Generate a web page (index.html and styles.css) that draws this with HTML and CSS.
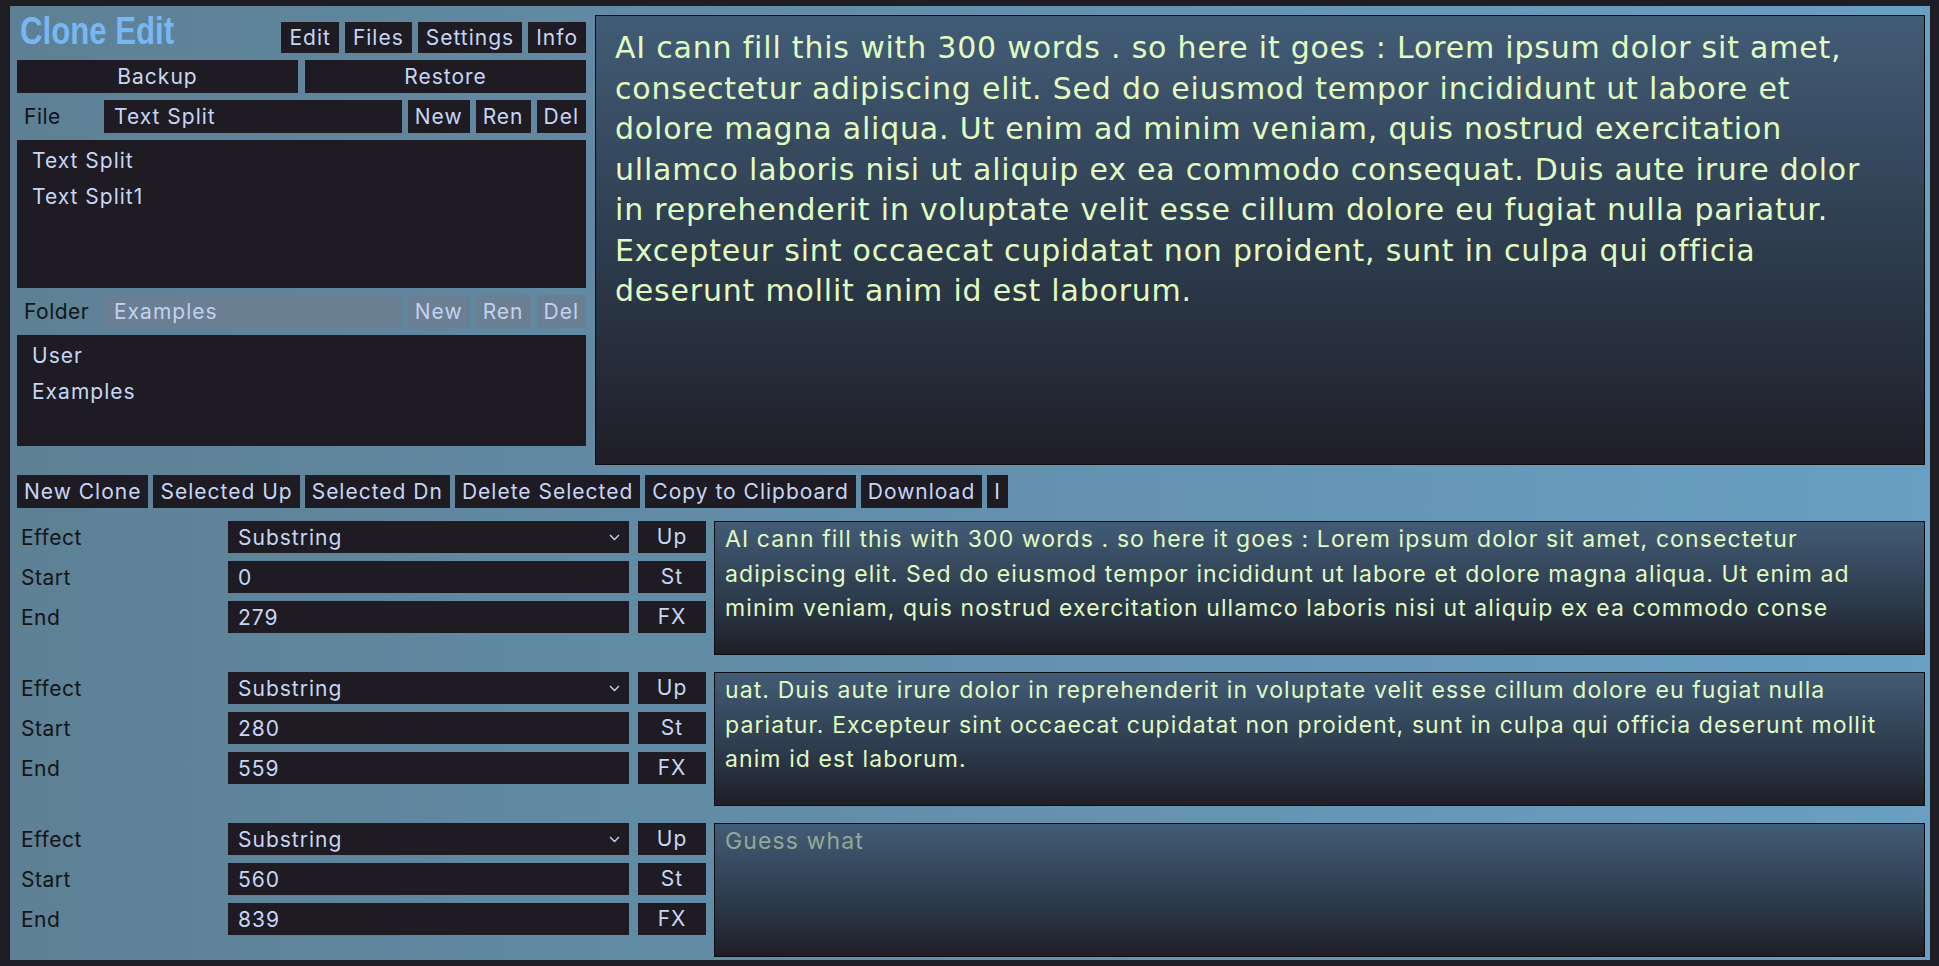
FILE: index.html
```html
<!DOCTYPE html>
<html lang="en">
<head>
<meta charset="utf-8">
<title>Clone Edit</title>
<link rel="stylesheet" href="styles.css">
</head>
<body>
<div class="app">
  <section class="top">
    <aside class="side">
      <header class="head">
        <h1 class="title">Clone Edit</h1>
        <nav class="tabs">
          <button class="btn">Edit</button>
          <button class="btn">Files</button>
          <button class="btn">Settings</button>
          <button class="btn">Info</button>
        </nav>
      </header>
      <div class="pair">
        <button class="btn">Backup</button>
        <button class="btn">Restore</button>
      </div>
      <div class="frow">
        <label class="flabel">File</label>
        <input class="field" value="Text Split">
        <button class="btn">New</button>
        <button class="btn">Ren</button>
        <button class="btn">Del</button>
      </div>
      <div class="list files">
        <div class="item">Text Split</div>
        <div class="item">Text Split1</div>
      </div>
      <div class="frow disabled">
        <label class="flabel">Folder</label>
        <input class="field" value="Examples" disabled>
        <button class="btn" disabled>New</button>
        <button class="btn" disabled>Ren</button>
        <button class="btn" disabled>Del</button>
      </div>
      <div class="list folders">
        <div class="item">User</div>
        <div class="item">Examples</div>
      </div>
    </aside>
    <div class="source">AI cann fill this with 300 words . so here it goes : Lorem ipsum dolor sit amet,<br>consectetur adipiscing elit. Sed do eiusmod tempor incididunt ut labore et<br>dolore magna aliqua. Ut enim ad minim veniam, quis nostrud exercitation<br>ullamco laboris nisi ut aliquip ex ea commodo consequat. Duis aute irure dolor<br>in reprehenderit in voluptate velit esse cillum dolore eu fugiat nulla pariatur.<br>Excepteur sint occaecat cupidatat non proident, sunt in culpa qui officia<br>deserunt mollit anim id est laborum.</div>
  </section>

  <div class="toolbar">
    <button class="btn">New Clone</button>
    <button class="btn">Selected Up</button>
    <button class="btn">Selected Dn</button>
    <button class="btn">Delete Selected</button>
    <button class="btn">Copy to Clipboard</button>
    <button class="btn">Download</button>
    <button class="btn">I</button>
  </div>

  <div class="clone">
    <div class="ctrl">
      <span class="clabel">Effect</span>
      <div class="select"><span>Substring</span><svg class="chev" width="11" height="7" viewBox="0 0 11 7"><polyline points="1,1 5.5,5.5 10,1" fill="none" stroke="currentColor" stroke-width="1.4"/></svg></div>
      <button class="btn">Up</button>
      <span class="clabel">Start</span>
      <input class="field" value="0">
      <button class="btn">St</button>
      <span class="clabel">End</span>
      <input class="field" value="279">
      <button class="btn">FX</button>
    </div>
    <div class="ctext">AI cann fill this with 300 words . so here it goes : Lorem ipsum dolor sit amet, consectetur<br>adipiscing elit. Sed do eiusmod tempor incididunt ut labore et dolore magna aliqua. Ut enim ad<br>minim veniam, quis nostrud exercitation ullamco laboris nisi ut aliquip ex ea commodo conse</div>
  </div>

  <div class="clone">
    <div class="ctrl">
      <span class="clabel">Effect</span>
      <div class="select"><span>Substring</span><svg class="chev" width="11" height="7" viewBox="0 0 11 7"><polyline points="1,1 5.5,5.5 10,1" fill="none" stroke="currentColor" stroke-width="1.4"/></svg></div>
      <button class="btn">Up</button>
      <span class="clabel">Start</span>
      <input class="field" value="280">
      <button class="btn">St</button>
      <span class="clabel">End</span>
      <input class="field" value="559">
      <button class="btn">FX</button>
    </div>
    <div class="ctext">uat. Duis aute irure dolor in reprehenderit in voluptate velit esse cillum dolore eu fugiat nulla<br>pariatur. Excepteur sint occaecat cupidatat non proident, sunt in culpa qui officia deserunt mollit<br>anim id est laborum.</div>
  </div>

  <div class="clone">
    <div class="ctrl">
      <span class="clabel">Effect</span>
      <div class="select"><span>Substring</span><svg class="chev" width="11" height="7" viewBox="0 0 11 7"><polyline points="1,1 5.5,5.5 10,1" fill="none" stroke="currentColor" stroke-width="1.4"/></svg></div>
      <button class="btn">Up</button>
      <span class="clabel">Start</span>
      <input class="field" value="560">
      <button class="btn">St</button>
      <span class="clabel">End</span>
      <input class="field" value="839">
      <button class="btn">FX</button>
    </div>
    <div class="ctext empty">Guess what</div>
  </div>
</div>
</body>
</html>
```

FILE: styles.css
```css
* { box-sizing: border-box; }

html, body {
  margin: 0;
  padding: 0;
  background: #1e1d23;
}

body {
  font-family: Inter, "Noto Sans", sans-serif;
  font-size: 21px;
  letter-spacing: 1px;
  color: #c8d6f6;
}

.app {
  margin: 6px 9px 6px 10px;
  height: 954px;
  background: linear-gradient(90deg, #5d8094 0%, #6490ad 50%, #699fc2 100%);
  padding: 9px 5px 0 7px;
  display: flex;
  flex-direction: column;
}

.btn {
  font-family: inherit;
  font-size: 21px;
  letter-spacing: 1px;
  color: #c8d6f6;
  background: #1e1b22;
  border: 0;
  border-radius: 0;
  margin: 0;
  padding: 0 7px;
  height: 32px;
  line-height: 32px;
  white-space: nowrap;
  cursor: pointer;
}

.field {
  font-family: inherit;
  font-size: 21px;
  letter-spacing: 1px;
  color: #c8d6f6;
  background: #1e1b22;
  border: 0;
  border-radius: 0;
  margin: 0;
  padding: 0 10px;
  height: 32px;
  min-width: 0;
  outline: none;
}

/* top section */
.top {
  display: flex;
  gap: 9px;
  height: 450px;
}

.side {
  width: 569px;
  flex: none;
  display: flex;
  flex-direction: column;
  gap: 7px;
}

.head {
  height: 38px;
  display: flex;
  justify-content: space-between;
  align-items: flex-start;
}

.title {
  margin: 0 0 0 3px;
  font-family: "Liberation Sans", Arial, sans-serif;
  font-weight: bold;
  font-size: 38px;
  line-height: 32px;
  letter-spacing: 0;
  color: #77b7f4;
  transform: scaleX(0.82);
  transform-origin: left center;
  white-space: nowrap;
}

.tabs {
  align-self: flex-end;
  display: flex;
  gap: 6px;
}

.tabs .btn { height: 31px; line-height: 31px; padding: 0 8px; }

.pair {
  display: flex;
  gap: 7px;
}

.pair .btn {
  flex: 1;
  height: 33px;
  line-height: 33px;
}

.frow {
  display: flex;
  gap: 6px;
  height: 33px;
  align-items: stretch;
}

.frow .btn, .frow .field { height: 33px; line-height: 33px; }
.frow .btn { padding: 0 7px; }

.flabel {
  width: 81px;
  flex: none;
  padding-left: 7px;
  color: #121519;
  line-height: 33px;
  letter-spacing: 0.5px;
}

.frow .field { flex: 1; }

.frow.disabled .field,
.frow.disabled .btn {
  background: #6b7f93;
  color: #c3d1ef;
  opacity: 1;
  cursor: default;
}

.list {
  background: #1e1b22;
  padding: 3px 15px 0;
  line-height: 36px;
  color: #c8d6f6;
}

.files { height: 148px; }
.folders { height: 111px; }

.source {
  flex: 1;
  border: 1px solid #0d0d12;
  background: linear-gradient(180deg, #425c76 0%, #2c3a4b 55%, #1f1e27 100%);
  font-family: "DejaVu Sans", Verdana, sans-serif;
  font-size: 30px;
  letter-spacing: 0.8px;
  line-height: 40.5px;
  color: #e1fbc1;
  padding: 12px 19px;
  white-space: nowrap;
  overflow: hidden;
}

/* toolbar */
.toolbar {
  margin-top: 10px;
  display: flex;
  gap: 5px;
}

.toolbar .btn { height: 33px; line-height: 33px; }

/* clone rows */
.clone {
  margin-top: 13px;
  display: flex;
  gap: 8px;
  height: 134px;
}

.clone + .clone { margin-top: 17px; }

.ctrl {
  flex: none;
  display: grid;
  grid-template-columns: 202px 401px 68px;
  grid-auto-rows: 32px;
  column-gap: 9px;
  row-gap: 8px;
  align-items: center;
  align-content: start;
}

.ctrl .btn, .ctrl .field, .ctrl .select { height: 32px; }
.ctrl .btn { padding: 0; }

.clabel {
  padding-left: 4px;
  color: #121519;
  letter-spacing: 0.5px;
}

.select {
  background: #1e1b22;
  display: flex;
  align-items: center;
  justify-content: space-between;
  padding: 0 9px 0 10px;
  color: #c8d6f6;
}

.chev { color: #c8d6f6; }

.ctext {
  flex: 1;
  border: 1px solid #0d0d12;
  background: linear-gradient(180deg, #425c76 0%, #2c3a4b 60%, #1f1e27 100%);
  font-family: Inter, "Noto Sans", sans-serif;
  font-size: 23px;
  letter-spacing: 1.1px;
  line-height: 34.5px;
  color: #e1fbc1;
  padding: 0 10px;
  white-space: nowrap;
  overflow: hidden;
}

.ctext.empty { color: #93a997; }
```
